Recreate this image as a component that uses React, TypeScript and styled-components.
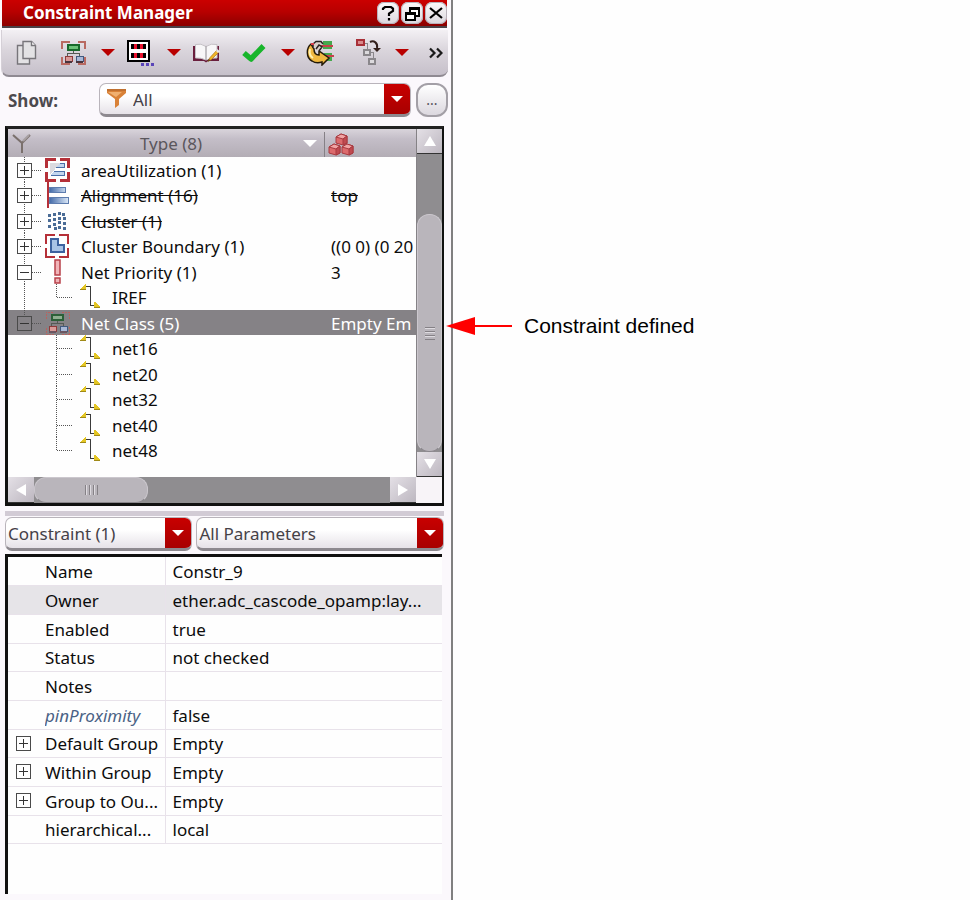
import React from "react";
import styled, { createGlobalStyle, css } from "styled-components";

const GlobalStyle = createGlobalStyle`
  *, *::before, *::after { box-sizing: border-box; }
  body {
    margin: 0;
    background: #fefefe;
    color: #0c0c0c;
    font-family: "Noto Sans", "Open Sans", sans-serif;
    font-size: 17px;
    line-height: 24px;
  }
  button, select {
    font: inherit;
    color: inherit;
    margin: 0;
    padding: 0;
    border: 0;
    background: none;
    border-radius: 0;
  }
  svg { display: block; }
`;

/* ---------- page ---------- */

const Page = styled.div`
  display: flex;
  align-items: flex-start;
  min-height: 100vh;
`;

const Panel = styled.section`
  display: flex;
  flex-direction: column;
  flex: 0 1 453px;
  min-width: 0;
  min-height: 100vh;
  border-right: 2px solid #808080;
  background: #fbf8fc;
`;

const Annotation = styled.p`
  display: flex;
  align-items: center;
  gap: 12px;
  margin: 314px 0 0 -7px;
  font-family: "Liberation Sans", Arial, sans-serif;
  font-size: 21px;
  line-height: 24px;
  color: #000;
  white-space: nowrap;
  z-index: 1;
`;

/* ---------- title bar ---------- */

const TitleBar = styled.header`
  display: flex;
  align-items: center;
  height: 28px;
  margin: 0 4px 0 2px;
  padding-left: 21px;
  border-bottom: 2px solid #4a4348;
  background: linear-gradient(#cb0000, #b80000 45%, #8c0000);
`;

const Title = styled.h1`
  flex: 1;
  margin: 0;
  font-size: 17px;
  line-height: 24px;
  font-weight: 700;
  color: #fff;
`;

const WindowButton = styled.button`
  display: grid;
  place-items: center;
  width: 22px;
  height: 22px;
  margin-left: 2px;
  border-radius: 7px;
  background: linear-gradient(#fbfafb, #dcd7de);
  box-shadow: inset 0 0 0 1px #b9b2bb;
`;

/* ---------- toolbar ---------- */

const Toolbar = styled.div`
  display: flex;
  align-items: center;
  height: 47px;
  margin: 2px 3px 0 1px;
  padding: 0 2px 0 8px;
  border-bottom: 2px solid #8f8a92;
  border-left: 1px solid #d5d0d7;
  border-radius: 0 0 8px 8px;
  background: linear-gradient(#f3f0f4, #dad5dc 45%, #c6c0ca);
`;

const ToolGroup = styled.div<{ $split?: boolean }>`
  display: flex;
  align-items: center;
  gap: 8px;
  margin-right: ${(p) => (p.$split ? 6 : 16)}px;
`;

const ToolButton = styled.button<{ $narrow?: boolean }>`
  display: grid;
  place-items: center;
  width: ${(p) => (p.$narrow ? 20 : 32)}px;
  height: 32px;
`;

const MoreButton = styled(ToolButton)`
  margin-left: auto;
`;

/* ---------- drop-downs ---------- */

const ShowRow = styled.div`
  display: flex;
  align-items: center;
  gap: 5px;
  margin: 6px 3px 0 8px;
`;

const ShowLabel = styled.label`
  width: 86px;
  padding-top: 2px;
  font-weight: 700;
  font-size: 17px;
  color: #4c4a4e;
`;

const Combo = styled.div<{ $grow: number; $basis: number }>`
  display: grid;
  grid-template-columns: auto minmax(0, 1fr) 26px;
  flex: ${(p) => p.$grow} 1 ${(p) => p.$basis}px;
  min-width: 0;
  height: 34px;
  border: 1px solid #b9b4bb;
  border-bottom: 3px solid #8d898f;
  border-radius: 7px;
  overflow: hidden;
  background: linear-gradient(#fff 40%, #e6e2e8);
`;

const ComboIcon = styled.span`
  grid-area: 1 / 1;
  align-self: center;
  padding-left: 7px;
`;

const ComboSelect = styled.select<{ $indent: number }>`
  grid-area: 1 / 1 / 2 / 4;
  appearance: none;
  width: 100%;
  height: 30px;
  padding: 2px 0 0 ${(p) => p.$indent}px;
  color: #454147;
  outline: none;
`;

const ComboArrow = styled.span`
  grid-area: 1 / 3;
  display: grid;
  place-items: center;
  background: linear-gradient(#c80000, #a80000);
  pointer-events: none;
`;

const RoundButton = styled.button`
  width: 32px;
  height: 34px;
  border: 2px solid #a39fa6;
  border-radius: 12px;
  background: linear-gradient(#fff, #dcd8df);
  color: #55505a;
  font-size: 14px;
  line-height: 24px;
`;

/* ---------- constraint tree ---------- */

const TreeFrame = styled.div`
  display: grid;
  grid-template-columns: minmax(0, 1fr) 26px;
  grid-template-rows: 348px 26px;
  margin: 9px 7px 0 5px;
  border: 3px solid #111;
  border-right-width: 2px;
  border-top-color: #222;
  background: #fefefe;
  overflow: hidden;
`;

const Tree = styled.table`
  display: block;
  min-width: 0;
  overflow: hidden;
`;

const TreeHead = styled.thead`
  display: block;
`;

const TreeBody = styled.tbody`
  display: block;
`;

const treeColumns = css`
  display: grid;
  grid-template-columns: minmax(0, 1fr) 92px;
  align-items: center;
`;

const HeadRow = styled.tr`
  ${treeColumns}
  height: 28px;
  background: linear-gradient(#d9d4db, #c4bec8 35%, #b3adb5);
`;

const HeadCell = styled.th`
  display: flex;
  align-items: center;
  height: 28px;
  padding: 0 7px 0 3px;
  font-weight: 400;
  color: #5a565c;
`;

const HeadLabel = styled.span`
  flex: 1;
  padding: 2px 0 0 6px;
  text-align: center;
`;

const ValueHead = styled(HeadCell)`
  height: 25px;
  border-left: 1px solid #858086;
  align-self: end;
`;

const TreeRow = styled.tr<{ $selected?: boolean }>`
  ${treeColumns}
  height: 25px;
  &:nth-child(even) { height: 26px; }
  overflow: hidden;
  background: ${(p) => (p.$selected ? "#858286" : "transparent")};
  color: ${(p) => (p.$selected ? "#fff" : "#0c0c0c")};
`;

const NameCell = styled.td`
  display: flex;
  align-items: center;
  height: 26px;
  padding: 0;
`;

const ValueCell = styled.td<{ $struck?: boolean }>`
  padding: 2px 0 0 7px;
  white-space: nowrap;
  overflow: hidden;
  text-decoration: ${(p) => (p.$struck ? "line-through" : "none")};
`;

const Guides = styled.span<{ $child?: boolean }>`
  display: grid;
  flex: none;
  align-items: center;
  width: ${(p) => (p.$child ? 72 : 37)}px;
`;

const GuideLines = styled.svg`
  grid-area: 1 / 1;
`;

const Toggle = styled.button<{ $dim?: boolean }>`
  grid-area: 1 / 1;
  display: grid;
  place-items: center;
  width: 15px;
  height: 15px;
  margin-left: 9px;
  border: 1px solid #4a4a4a;
  background: ${(p) => (p.$dim ? "#858286" : "#fefefe")};
`;

const PropertyToggle = styled(Toggle)`
  margin-left: 8px;
`;

const RowLabel = styled.span<{ $struck?: boolean; $child?: boolean }>`
  padding: 2px 0 0 ${(p) => (p.$child ? 11 : 10)}px;
  white-space: nowrap;
  text-decoration: ${(p) => (p.$struck ? "line-through" : "none")};
`;

/* ---------- scroll bars ---------- */

const VScroll = styled.div`
  display: grid;
  grid-template-rows: 25px 60px minmax(0, 1fr) 25px;
  background: #8f8d90;
  border-left: 1px solid #858286;
`;

const HScroll = styled.div`
  display: grid;
  grid-template-columns: 26px 114px minmax(0, 1fr) 26px;
  background: #8f8d90;
`;

const ScrollButton = styled.button`
  display: grid;
  place-items: center;
  border-bottom: 1px solid #333;
  background: linear-gradient(135deg, #e4e0e6, #bdb7c0);
`;

const Thumb = styled.div`
  display: grid;
  place-items: center;
  border-radius: 12px;
  border: 1px solid #cbc7cd;
  border-bottom-color: #8a868c;
  background: #b9b5bb;
`;

const Corner = styled.div`
  background: #f8f4f8;
`;

const Splitter = styled.div`
  height: 5px;
  margin: 5px 7px 0 5px;
  background: #d2cbd5;
`;

const FilterRow = styled.div`
  display: flex;
  gap: 4px;
  margin: 1px 7px 0 5px;
`;

/* ---------- property grid ---------- */

const PropertyFrame = styled.div`
  flex: 1;
  margin: 3px 9px 6px 5px;
  border-top: 3px solid #111;
  border-left: 3px solid #111;
  background: #fefefe;
`;

const Properties = styled.table`
  width: 100%;
  border-collapse: collapse;
  table-layout: fixed;
`;

const PropertyRow = styled.tr<{ $shaded?: boolean }>`
  height: 29px;
  &:nth-child(3n + 1) { height: 28px; }
  border-bottom: 1px solid #e8e2ea;
  background: ${(p) => (p.$shaded ? "#e6e4e8" : "transparent")};
`;

const PropertyMark = styled.td`
  padding: 0;
`;

const PropertyName = styled.th<{ $derived?: boolean }>`
  padding: 2px 0 0;
  border-right: 1px solid #e8e2ea;
  font-weight: 400;
  font-style: ${(p) => (p.$derived ? "italic" : "normal")};
  color: ${(p) => (p.$derived ? "#4a6285" : "inherit")};
  text-align: left;
  white-space: nowrap;
  overflow: hidden;
`;

const PropertyValue = styled.td`
  padding: 2px 0 0 7px;
  white-space: nowrap;
  overflow: hidden;
`;

/* ---------- icons ---------- */

const Caret = ({ color = "#b90000", size = 14 }: { color?: string; size?: number }) => (
  <svg width={size} height={size / 2} viewBox="0 0 14 7">
    <path d="M0 0H14L7 7Z" fill={color} />
  </svg>
);

const CopyIcon = () => (
  <svg width="21" height="26" viewBox="0 0 21 26" fill="#e3e2e4" stroke="#77757a" strokeWidth="1.4">
    <path d="M1.5 5.5H13.5V24H1.5Z" />
    <path d="M7 1.5H15.5L19.5 5.5V18.5H7Z" />
    <path d="M15.5 1.5V5.5H19.5" fill="#fff" />
  </svg>
);

const NetClassIcon = ({ dim }: { dim?: boolean }) => (
  <svg width="26" height="26" viewBox="0 0 26 26" fill="none" shapeRendering="crispEdges">
    <path
      d="M1 9V2H9M17 2H24V9M24 17V24H17M9 24H1V17"
      stroke={dim ? "#b8635f" : "#b96a62"}
      strokeWidth={dim ? 1 : 2}
      strokeDasharray={dim ? "2 1" : undefined}
    />
    <path d="M12.500 10V13M6.500 16V13.500H18.500V16" stroke="#555a55" />
    <path d="M7 5H18V10H7Z" fill={dim ? "#8fae90" : "#6cc278"} stroke={dim ? "#2c6038" : "#17692a"} strokeWidth="2" />
    <path d="M4 16H11V21H4Z" fill="#d99a98" stroke="#8f3a3a" />
    <path d="M15 16H22V21H15Z" fill="#a9b8d6" stroke="#40597f" />
    <path d="M4 22H11M15 22H22" stroke={dim ? "#6b5560" : "#49343c"} strokeWidth="2" />
  </svg>
);

const MatrixIcon = () => (
  <svg width="28" height="28" viewBox="0 0 28 28" shapeRendering="crispEdges">
    <path d="M2 2H23V22H2Z" fill="#fff" stroke="#000" strokeWidth="2" />
    <path d="M5 5H20V10H5ZM5 14H20V19H5Z" fill="#000" />
    <path d="M8 5H11V10H8ZM14 5H17V10H14ZM8 14H11V19H8ZM14 14H17V19H14Z" fill="#e8112d" />
    <path d="M15 24H18V27H15ZM20 24H23V27H20ZM25 24H28V27H25Z" fill="#5a45b8" />
  </svg>
);

const BookIcon = () => (
  <svg width="27" height="20" viewBox="0 0 27 20">
    <path d="M0 3H26V18H15L13 19.500L11 18H0Z" fill="#6a1f3d" />
    <path d="M2.500 1.500Q8 0 13 3.500Q18 0 24 1.500V15Q18 14.500 13 17Q8 14.500 2.500 15Z" fill="#f8f7f8" stroke="#c5c1c6" />
    <path d="M13 3.500V16.500" stroke="#8d888e" />
    <path d="M15.500 18L17 14.500L24 7L26 9L18.500 16.500Z" fill="#f0b428" stroke="#9c6a10" strokeWidth=".6" />
    <path d="M23 8L24.500 6L27 8.500L25 10Z" fill="#e8e4ea" />
    <path d="M14.500 19L15.500 16L17.500 17.500Z" fill="#6b4a10" />
  </svg>
);

const CheckIcon = () => (
  <svg width="24" height="20" viewBox="0 0 24 20">
    <path d="M2 10L9 16L21.500 3" fill="none" stroke="#18b52b" strokeWidth="5.500" strokeLinejoin="round" />
  </svg>
);

const RefreshIcon = () => (
  <svg width="28" height="26" viewBox="0 0 28 26">
    <path d="M17 1H26V9H17ZM18 13H26V21H18Z" fill="#46a84d" />
    <path d="M14 6H27M18 16H28" stroke="#c8404a" strokeWidth="2" />
    <path
      d="M5 4C0 8 0 18 6 21C9 23 13 23 16 22L16 25L23 18L13 11L13 15C10 15 8 13 8 9Z"
      fill="#f0b840"
      stroke="#241a08"
      strokeWidth="1.500"
    />
    <path d="M4 9C3 13 4 16 7 18" stroke="#fff0b0" strokeWidth="2" fill="none" />
    <path d="M7 8V4L10 1.500H15L17 4M10 9L13 5L16 7L13 11" stroke="#2a2420" strokeWidth="1.500" fill="#d8cfc8" />
    <path d="M5 3H8V5H5Z" fill="#d8404a" />
  </svg>
);

const HierarchyIcon = () => (
  <svg width="25" height="27" viewBox="0 0 25 27" fill="none">
    <g shapeRendering="crispEdges">
      <path d="M8 4H11V10M14 13H17V19" stroke="#8a878b" />
      <path d="M1 1H8V6H1Z" fill="#d98a8c" stroke="#a83038" strokeWidth="2" />
      <path d="M8 11H14V16H8Z" fill="#dcdadd" stroke="#8a878b" strokeWidth="2" />
      <path d="M13 20H19V25H13Z" fill="#dcdadd" stroke="#8a878b" strokeWidth="2" />
    </g>
    <path d="M14 3C18 1 22 4 21 9" stroke="#33201c" strokeWidth="2" />
    <path d="M17 9H25L21 13Z" fill="#33201c" />
  </svg>
);

const ChevronsIcon = () => (
  <svg width="14" height="12" viewBox="0 0 14 12" fill="none" stroke="#1a1a1a" strokeWidth="2.200">
    <path d="M1 1.500L5.500 6L1 10.500M8 1.500L12.500 6L8 10.500" />
  </svg>
);

const HelpIcon = () => (
  <svg width="14" height="16" viewBox="0 0 14 16" fill="none" stroke="#000" strokeWidth="2.200">
    <path d="M2 5V3.500L4 2H10L12 3.500V6L8 8.500V11" />
    <path d="M8 13V15.500" />
  </svg>
);

const RestoreIcon = () => (
  <svg width="15" height="15" viewBox="0 0 15 15" fill="#fff" stroke="#000" strokeWidth="1.500" shapeRendering="crispEdges">
    <path d="M5 2H14V10H5Z" />
    <path d="M5 2.500H14" strokeWidth="3" />
    <path d="M1 7H10V14H1Z" />
    <path d="M1 7.500H10" strokeWidth="3" />
  </svg>
);

const CloseIcon = () => (
  <svg width="14" height="12" viewBox="0 0 14 12" stroke="#000" strokeWidth="2.200">
    <path d="M1 1L13 11M13 1L1 11" />
  </svg>
);

const FunnelIcon = () => (
  <svg width="20" height="20" viewBox="0 0 20 20">
    <path d="M0 1H19V4L12 10V16L8 19V10L0 4Z" fill="#d98238" />
    <path d="M1 3H15L9 8Z" fill="#f0b070" />
    <path d="M0 1H19" stroke="#c07030" strokeWidth="2" />
  </svg>
);

const FilterOutlineIcon = () => (
  <svg width="22" height="22" viewBox="0 0 22 22" fill="none">
    <path d="M2 3L11 11V21M19 3L11 11" stroke="#7a706c" strokeWidth="2" />
    <path d="M12 9L18 3" stroke="#a7a0a2" strokeWidth="2" />
  </svg>
);

const CubesIcon = () => (
  <svg width="27" height="24" viewBox="0 0 27 24" stroke="#a83a40" strokeLinejoin="round">
    {[
      [7, 0],
      [0, 10],
      [13, 10],
    ].map(([x, y]) => (
      <g key={`${x}-${y}`} transform={`translate(${x} ${y})`}>
        <path d="M1 4L6 1L12 3V10L8 12L1 10Z" fill="#dc6a6c" />
        <path d="M1 4L6 1L12 3L8 6Z" fill="#f0a4a4" />
        <path d="M8 6V12L12 10V3Z" fill="#c04a50" />
      </g>
    ))}
  </svg>
);

const AreaIcon = () => (
  <svg width="26" height="26" viewBox="0 0 26 26" fill="none" shapeRendering="crispEdges">
    <path d="M1.500 11V2.500H11M15 2.500H23.500V11M23.500 15V23.500H15M11 23.500H1.500V15" stroke="#b53038" strokeWidth="3" />
    <path d="M13 6H19V11H10ZM9 14H19V19H6V17Z" fill="#c3d6ee" />
    <path d="M12 6.500H19.500V10.500H11M9 14.500H19.500V18.500H6" stroke="#4a6fa8" />
    <path d="M5 6H15L5 18Z" fill="#dbdbe0" />
  </svg>
);

const AlignIcon = () => (
  <svg width="26" height="26" viewBox="0 0 26 26" shapeRendering="crispEdges">
    <defs>
      <linearGradient id="align-bar" x1="0" x2="1">
        <stop offset="0" stopColor="#3f67a6" />
        <stop offset="1" stopColor="#dce9f8" />
      </linearGradient>
    </defs>
    <path d="M4 5.500H20.500V10.500H4ZM4 15.500H23.500V21.500H4Z" fill="url(#align-bar)" stroke="#5d7cae" />
    <path d="M2 0H4V26H2Z" fill="#b53038" />
  </svg>
);

const dots: [number, number][] = [
  [13, 4], [8, 5], [17, 5], [3, 6], [13, 9], [8, 10], [3, 11], [18, 9],
  [13, 13], [8, 15], [3, 17], [18, 14], [13, 18], [9, 19], [18, 19],
];

const ClusterIcon = () => (
  <svg width="26" height="26" viewBox="0 0 26 26" fill="#4a6c96" shapeRendering="crispEdges">
    {dots.map(([x, y]) => (
      <rect key={`${x}-${y}`} x={x} y={y} width="3" height="3" />
    ))}
  </svg>
);

const BoundaryIcon = () => (
  <svg width="26" height="26" viewBox="0 0 26 26" fill="none" shapeRendering="crispEdges">
    <path d="M1 11V2H10M14 2H23V11M23 15V24H14M10 24H1V15" stroke="#b53038" strokeWidth="2" />
    <path d="M6 6H13V12H19V19H6Z" fill="#a9c3e6" stroke="#3d62a0" strokeWidth="2" />
  </svg>
);

const PriorityIcon = () => (
  <svg width="26" height="26" viewBox="0 0 26 26" fill="#f0b4b8" stroke="#b8404a" strokeWidth="1.500">
    <path d="M10 1H15V16H10ZM10 19H15V24H10Z" />
  </svg>
);

const NetIcon = () => (
  <svg width="21" height="26" viewBox="0 0 21 26" fill="none" shapeRendering="crispEdges">
    <path d="M5 2.500H10.500V21.500H14" stroke="#3a3a3a" strokeWidth="1" />
    <path d="M0 6V5L5 0H6V6ZM14 24V18H15L20 22V24Z" fill="#e4c624" />
    <path d="M0 5.500H6M14 23.500H20" stroke="#a08a18" />
  </svg>
);

const Grip = ({ vertical }: { vertical?: boolean }) => (
  <svg width="14" height="14" viewBox="0 0 14 14" shapeRendering="crispEdges" strokeWidth="1">
    <path d={vertical ? "M1.500 2V12M5.500 2V12M9.500 2V12M13.500 2V12" : "M2 1.500H12M2 5.500H12M2 9.500H12M2 13.500H12"} stroke="#858186" />
    <path d={vertical ? "M2.500 2V12M6.500 2V12M10.500 2V12" : "M2 2.500H12M2 6.500H12M2 10.500H12"} stroke="#dedbe0" />
  </svg>
);

const PlusMinus = ({ open }: { open?: boolean }) => (
  <svg width="9" height="9" viewBox="0 0 9 9" shapeRendering="crispEdges">
    <path d={open ? "M0 4.500H9" : "M0 4.500H9M4.500 0V9"} stroke="#333" />
  </svg>
);

const ScrollArrow = ({ d }: { d: string }) => (
  <svg width="14" height="12" viewBox="0 0 14 12" fill="#fff">
    <path d={d} />
  </svg>
);

const Arrow = () => (
  <svg width="66" height="18" viewBox="0 0 66 18">
    <path d="M0 9L29 0V18Z" fill="#f00" />
    <path d="M28 9H66" stroke="#f00" strokeWidth="2" />
  </svg>
);

/* ---------- data ---------- */

type Node = {
  name: string;
  value?: string;
  icon: React.ReactNode;
  lines: string;
  child?: boolean;
  open?: boolean;
  struck?: boolean;
  selected?: boolean;
};

const ROOT_LINE = "M16.500 0V26M24 13.500H33";
const CHILD_LINE = "M48.500 0V26M49 13.500H65";
const CHILD_END = "M48.500 0V14M49 13.500H65";

const net = (name: string, lines: string): Node => ({ name, icon: <NetIcon />, lines, child: true });

const nodes: Node[] = [
  { name: "areaUtilization (1)", icon: <AreaIcon />, lines: ROOT_LINE },
  { name: "Alignment (16)", value: "top", icon: <AlignIcon />, lines: ROOT_LINE, struck: true },
  { name: "Cluster (1)", icon: <ClusterIcon />, lines: ROOT_LINE, struck: true },
  { name: "Cluster Boundary (1)", value: "((0 0) (0 20", icon: <BoundaryIcon />, lines: ROOT_LINE },
  { name: "Net Priority (1)", value: "3", icon: <PriorityIcon />, lines: ROOT_LINE, open: true },
  net("IREF", `M16.500 0V26${CHILD_END}`),
  {
    name: "Net Class (5)",
    value: "Empty Em",
    icon: <NetClassIcon dim />,
    lines: "M16.500 0V14M24 13.500H33",
    open: true,
    selected: true,
  },
  net("net16", CHILD_LINE),
  net("net20", CHILD_LINE),
  net("net32", CHILD_LINE),
  net("net40", CHILD_LINE),
  net("net48", CHILD_END),
];

const properties: { name: string; value: string; shaded?: boolean; derived?: boolean; group?: boolean }[] = [
  { name: "Name", value: "Constr_9" },
  { name: "Owner", value: "ether.adc_cascode_opamp:lay...", shaded: true },
  { name: "Enabled", value: "true" },
  { name: "Status", value: "not checked" },
  { name: "Notes", value: "" },
  { name: "pinProximity", value: "false", derived: true },
  { name: "Default Group", value: "Empty", group: true },
  { name: "Within Group", value: "Empty", group: true },
  { name: "Group to Ou...", value: "Empty", group: true },
  { name: "hierarchical...", value: "local" },
];

/* ---------- composed parts ---------- */

const SplitTool = ({ label, children }: { label: string; children: React.ReactNode }) => (
  <ToolGroup $split>
    <ToolButton aria-label={label}>{children}</ToolButton>
    <ToolButton $narrow aria-label={`${label} menu`}>
      <Caret />
    </ToolButton>
  </ToolGroup>
);

const Tool = ({ label, children }: { label: string; children: React.ReactNode }) => (
  <ToolGroup>
    <ToolButton aria-label={label}>{children}</ToolButton>
  </ToolGroup>
);

type DropDownProps = {
  id?: string;
  label?: string;
  text: string;
  grow?: number;
  basis: number;
  icon?: React.ReactNode;
};

const DropDown = ({ id, label, text, grow = 1, basis, icon }: DropDownProps) => (
  <Combo $grow={grow} $basis={basis}>
    <ComboSelect id={id} aria-label={label} $indent={icon ? 33 : 2}>
      <option>{text}</option>
    </ComboSelect>
    {icon && <ComboIcon>{icon}</ComboIcon>}
    <ComboArrow>
      <Caret color="#fff" size={12} />
    </ComboArrow>
  </Combo>
);

export default function App() {
  return (
    <>
      <GlobalStyle />
      <Page>
        <Panel>
          <TitleBar>
            <Title>Constraint Manager</Title>
            <WindowButton aria-label="Help"><HelpIcon /></WindowButton>
            <WindowButton aria-label="Float"><RestoreIcon /></WindowButton>
            <WindowButton aria-label="Close"><CloseIcon /></WindowButton>
          </TitleBar>

          <Toolbar role="toolbar" aria-label="Constraints">
            <Tool label="Copy"><CopyIcon /></Tool>
            <SplitTool label="Constraint type"><NetClassIcon /></SplitTool>
            <SplitTool label="Module generator"><MatrixIcon /></SplitTool>
            <Tool label="Edit notes"><BookIcon /></Tool>
            <SplitTool label="Check"><CheckIcon /></SplitTool>
            <Tool label="Update"><RefreshIcon /></Tool>
            <SplitTool label="Hierarchy"><HierarchyIcon /></SplitTool>
            <MoreButton $narrow aria-label="More tools"><ChevronsIcon /></MoreButton>
          </Toolbar>

          <ShowRow>
            <ShowLabel htmlFor="show">Show:</ShowLabel>
            <DropDown id="show" text="All" basis={312} icon={<FunnelIcon />} />
            <RoundButton aria-label="Show options">...</RoundButton>
          </ShowRow>

          <TreeFrame>
            <Tree role="treegrid">
              <TreeHead>
                <HeadRow>
                  <HeadCell scope="col">
                    <FilterOutlineIcon />
                    <HeadLabel>Type (8)</HeadLabel>
                    <Caret color="#fff" size={14} />
                  </HeadCell>
                  <ValueHead scope="col" aria-label="Value"><CubesIcon /></ValueHead>
                </HeadRow>
              </TreeHead>
              <TreeBody>
                {nodes.map((n) => (
                  <TreeRow key={n.name} $selected={n.selected} aria-selected={!!n.selected}>
                    <NameCell>
                      <Guides $child={n.child}>
                        <GuideLines width={n.child ? 72 : 37} height="26" fill="none" stroke="#555" strokeDasharray="1 1" shapeRendering="crispEdges">
                          <path d={n.lines} />
                        </GuideLines>
                        {!n.child && (
                          <Toggle $dim={n.selected} aria-expanded={!!n.open} aria-label={n.name}>
                            <PlusMinus open={n.open} />
                          </Toggle>
                        )}
                      </Guides>
                      {n.icon}
                      <RowLabel $struck={n.struck} $child={n.child}>{n.name}</RowLabel>
                    </NameCell>
                    <ValueCell $struck={n.struck}>{n.value}</ValueCell>
                  </TreeRow>
                ))}
              </TreeBody>
            </Tree>
            <VScroll>
              <ScrollButton aria-label="Scroll up"><ScrollArrow d="M7 1L13 11H1Z" /></ScrollButton>
              <span />
              <Thumb><Grip /></Thumb>
              <ScrollButton aria-label="Scroll down"><ScrollArrow d="M1 1H13L7 11Z" /></ScrollButton>
            </VScroll>
            <HScroll>
              <ScrollButton aria-label="Scroll left"><ScrollArrow d="M12 0V12L2 6Z" /></ScrollButton>
              <Thumb><Grip vertical /></Thumb>
              <span />
              <ScrollButton aria-label="Scroll right"><ScrollArrow d="M2 0V12L12 6Z" /></ScrollButton>
            </HScroll>
            <Corner />
          </TreeFrame>

          <Splitter role="separator" />

          <FilterRow>
            <DropDown label="Constraint" text="Constraint (1)" grow={187} basis={187} />
            <DropDown label="Parameters" text="All Parameters" grow={247} basis={247} />
          </FilterRow>

          <PropertyFrame>
            <Properties>
              <colgroup>
                <col width="37" />
                <col width="120" />
                <col />
              </colgroup>
              <tbody>
                {properties.map((p) => (
                  <PropertyRow key={p.name} $shaded={p.shaded}>
                    <PropertyMark>
                      {p.group && (
                        <PropertyToggle aria-expanded={false} aria-label={p.name}>
                          <PlusMinus />
                        </PropertyToggle>
                      )}
                    </PropertyMark>
                    <PropertyName scope="row" $derived={p.derived}>{p.name}</PropertyName>
                    <PropertyValue>{p.value}</PropertyValue>
                  </PropertyRow>
                ))}
              </tbody>
            </Properties>
          </PropertyFrame>
        </Panel>

        <Annotation>
          <Arrow />
          Constraint defined
        </Annotation>
      </Page>
    </>
  );
}
